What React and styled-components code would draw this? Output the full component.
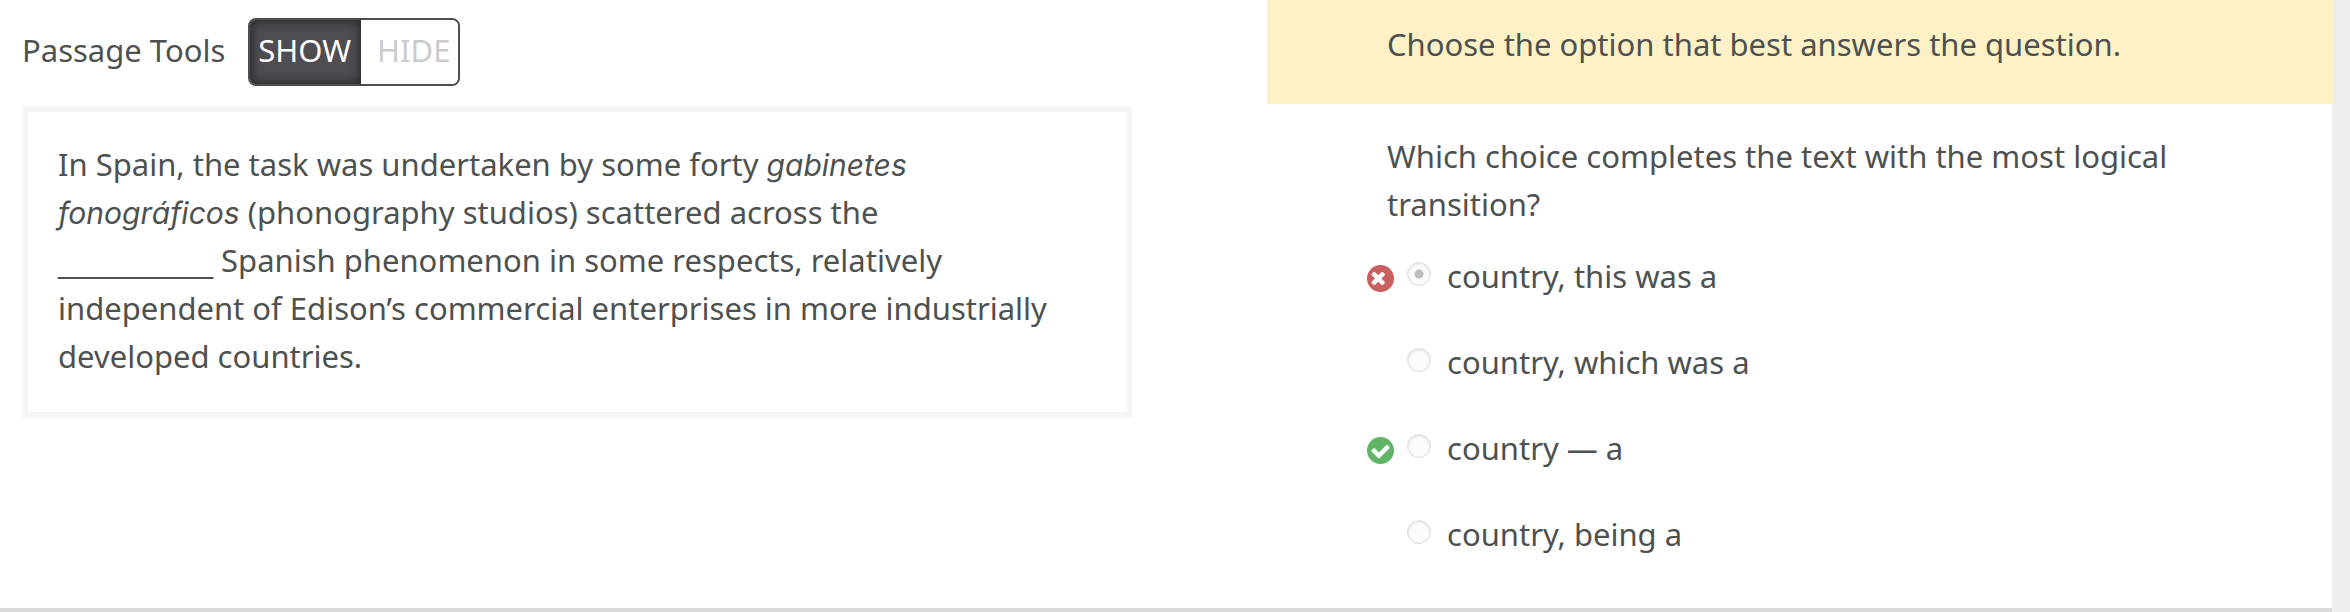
import React, { useState } from "react";
import styled, { createGlobalStyle } from "styled-components";

const GlobalStyle = createGlobalStyle`
  * { box-sizing: border-box; }
  body {
    margin: 0;
    background: #eeeeee;
    color: #4d514f;
    font-family: "Noto Sans", "Open Sans", sans-serif;
    font-size: 31px;
    line-height: 48px;
  }
`;

const Page = styled.main`
  display: grid;
  grid-template-columns: 1267fr 1065fr;
  margin-right: 18px;
  min-height: 100vh;
  background: #fff;
  border-bottom: 4px solid #d9d9db;
`;

const PassagePane = styled.section`
  padding: 18px 135px 50px 22px;
`;

const Toolbar = styled.div`
  display: flex;
  align-items: baseline;
  gap: 23px;
  margin-bottom: 20px;
`;

const Toggle = styled.div`
  display: flex;
  border: 2px solid #4f4c52;
  border-radius: 8px;
  overflow: hidden;
`;

const ToggleButton = styled.button`
  margin: 0;
  border: 0;
  padding: ${(p) => (p.$wide ? "0 8px 4px 16px" : "0 10px 4px 8px")};
  font: inherit;
  line-height: 60px;
  cursor: pointer;
  color: ${(p) => (p.$active ? "#fff" : "#cbcbcb")};
  background: ${(p) => (p.$active ? "#4f4c52" : "#fff")};
  box-shadow: ${(p) => (p.$active ? "inset 0 0 12px #1d1d20" : "none")};
`;

const PassageCard = styled.article`
  border: 6px solid #f6f6f9;
  padding: 28px 48px 32px 30px;
`;

const Passage = styled.p`
  margin: 0;
`;

const Foreign = styled.em`
  font-family: "Inter", sans-serif;
  font-size: 30px;
  line-height: 1;
`;

const Blank = styled.span`
  font-family: "DejaVu Sans", sans-serif;
  line-height: 1;
`;

const QuestionPane = styled.section`
  padding-bottom: 50px;
`;

const Directions = styled.div`
  margin-right: -2px;
  padding: 20px 60px 36px 120px;
  background: #fef1c6;
`;

const Answers = styled.fieldset`
  margin: 0;
  border: 0;
  padding: 28px 60px 0 100px;
`;

const Question = styled.legend`
  float: left;
  width: 100%;
  margin-bottom: 24px;
  padding: 0 0 0 20px;
`;

const OptionList = styled.div`
  clear: both;
  display: grid;
  gap: 38px;
`;

const Option = styled.label`
  display: grid;
  grid-template-columns: 27px 24px 1fr;
  align-items: start;
`;

const Mark = styled.span`
  display: flex;
  padding-top: 13px;
`;

const Radio = styled.input`
  appearance: none;
  width: 24px;
  height: 24px;
  margin: 10px 0 0 13px;
  border: 1px solid #dcdcdc;
  border-radius: 50%;
  background: ${(p) =>
    p.checked ? "radial-gradient(circle, #bdbdbd 4px, #fcfcfc 5px)" : "#fcfcfc"};
  box-shadow: inset 0 1px 3px #dedede;
`;

const OptionText = styled.span`
  padding-left: 29px;
`;

const CROSS =
  "M1149 1122q0-26-19-45l-181-181 181-181q19-19 19-45 0-27-19-46l-90-90q-19-19-46-19-26 0-45 19l-181 181-181-181q-19-19-45-19-27 0-46 19l-90 90q-19 19-19 46 0 26 19 45l181 181-181 181q-19 19-19 45 0 27 19 46l90 90q19 19 46 19 26 0 45-19l181-181 181 181q19 19 45 19 27 0 46-19l90-90q19-19 19-46z";
const CHECK =
  "M1412 734q0-28-18-46l-91-90q-19-19-45-19t-45 19l-408 407-226-226q-19-19-45-19t-45 19l-91 90q-18 18-18 46 0 27 18 45l362 362q19 19 45 19 27 0 46-19l543-543q18-18 18-45z";

function ResultIcon({ result }) {
  const right = result === "correct";
  return (
    <svg
      width="27"
      height="27"
      viewBox="128 128 1536 1536"
      role="img"
      aria-label={right ? "Correct answer" : "Incorrect answer"}
    >
      <circle cx="896" cy="896" r="768" fill={right ? "#5fb565" : "#c96060"} />
      <path fill="#fff" d={right ? CHECK : CROSS} />
    </svg>
  );
}

const options = [
  { text: "country, this was a", result: "incorrect" },
  { text: "country, which was a" },
  { text: "country — a", result: "correct" },
  { text: "country, being a" },
];

export default function App() {
  const [tools, setTools] = useState("SHOW");
  const [chosen, setChosen] = useState(0);

  return (
    <>
      <GlobalStyle />
      <Page>
        <PassagePane>
          <Toolbar>
            <span id="tools-label">Passage Tools</span>
            <Toggle role="group" aria-labelledby="tools-label">
              {["SHOW", "HIDE"].map((name) => (
                <ToggleButton
                  key={name}
                  type="button"
                  $active={tools === name}
                  $wide={name === "HIDE"}
                  aria-pressed={tools === name}
                  onClick={() => setTools(name)}
                >
                  {name}
                </ToggleButton>
              ))}
            </Toggle>
          </Toolbar>
          <PassageCard>
            <Passage>
              In Spain, the task was undertaken by some forty{" "}
              <Foreign>gabinetes</Foreign> <Foreign>fonográficos</Foreign>{" "}
              (phonography studios) scattered across the{" "}
              <Blank>__________</Blank>&nbsp;Spanish phenomenon in some
              respects, relatively independent of Edison’s commercial
              enterprises in more industrially developed countries.
            </Passage>
          </PassageCard>
        </PassagePane>

        <QuestionPane>
          <Directions>
            Choose the option that best answers the question.
          </Directions>
          <Answers>
            <Question>
              Which choice completes the text with the most logical transition?
            </Question>
            <OptionList>
              {options.map((option, i) => (
                <Option key={option.text}>
                  <Mark>{option.result && <ResultIcon result={option.result} />}</Mark>
                  <Radio
                    type="radio"
                    name="answer"
                    checked={chosen === i}
                    onChange={() => setChosen(i)}
                  />
                  <OptionText>{option.text}</OptionText>
                </Option>
              ))}
            </OptionList>
          </Answers>
        </QuestionPane>
      </Page>
    </>
  );
}
